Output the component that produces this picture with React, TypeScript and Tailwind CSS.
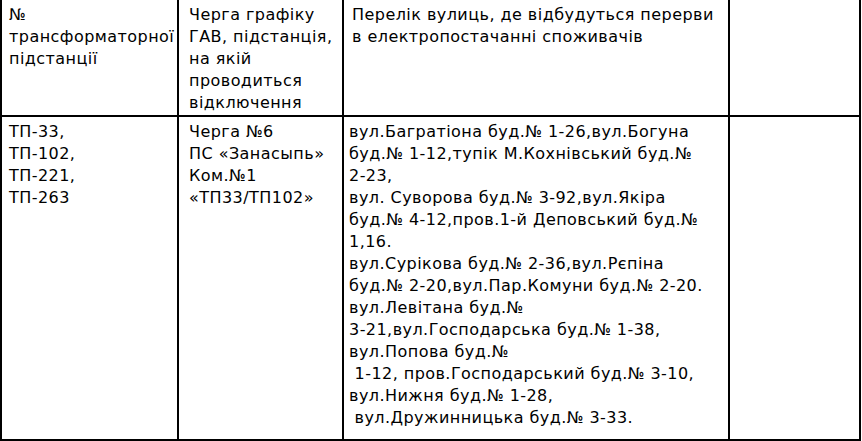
const font = { fontFamily: '"DejaVu Sans", sans-serif' }

const streets = [
  "вул.Багратіона буд.№ 1-26,вул.Богуна",
  "буд.№ 1-12,тупік М.Кохнівський буд.№",
  "2-23,",
  "вул. Суворова буд.№ 3-92,вул.Якіра",
  "буд.№ 4-12,пров.1-й Деповський буд.№",
  "1,16.",
  "вул.Сурікова буд.№ 2-36,вул.Рєпіна",
  "буд.№ 2-20,вул.Пар.Комуни буд.№ 2-20.",
  "вул.Левітана буд.№",
  "3-21,вул.Господарська буд.№ 1-38,",
  "вул.Попова буд.№",
  " 1-12, пров.Господарський буд.№ 3-10,",
  "вул.Нижня буд.№ 1-28,",
  " вул.Дружинницька буд.№ 3-33.",
]

function Lines({ items }: { items: string[] }) {
  return (
    <>
      {items.map((l, i) => (
        <div key={i} className="whitespace-pre">{l}</div>
      ))}
    </>
  )
}

export default function App() {
  return (
    <div className="w-[862px] h-[441px] bg-white overflow-hidden">
      <div
        className="grid grid-cols-[179px_165px_386px_131px] grid-rows-[117px_324px] text-[16px] tracking-[0.45px] leading-[22px] text-black"
        style={font}
      >
        {/* шапка */}
        <div className="border-l-2 border-r-2 border-b-2 border-black pl-[7px] pt-[4px]">
          <Lines items={["№", "трансформаторної", "підстанції"]} />
        </div>
        <div className="border-r-2 border-b-2 border-black pl-[10px] pt-[4px]">
          <Lines items={["Черга графіку", "ГАВ, підстанція,", "на якій", "проводиться", "відключення"]} />
        </div>
        <div className="border-r-2 border-b-2 border-black pl-[8px] pt-[4px]">
          <Lines items={["Перелік вулиць, де відбудуться перерви", "в електропостачанні споживачів"]} />
        </div>
        <div className="border-r-2 border-b-2 border-black" />

        {/* дані */}
        <div className="border-l-2 border-r-2 border-b-2 border-black pl-[7px] pt-[4px]">
          <Lines items={["ТП-33,", "ТП-102,", "ТП-221,", "ТП-263"]} />
        </div>
        <div className="border-r-2 border-b-2 border-black pl-[10px] pt-[4px]">
          <Lines items={["Черга №6", "ПС «Занасыпь»", "Ком.№1", "«ТП33/ТП102»"]} />
        </div>
        <div className="border-r-2 border-b-2 border-black pl-[5px] pt-[4px]">
          <Lines items={streets} />
        </div>
        <div className="border-r-2 border-b-2 border-black" />
      </div>
    </div>
  )
}
